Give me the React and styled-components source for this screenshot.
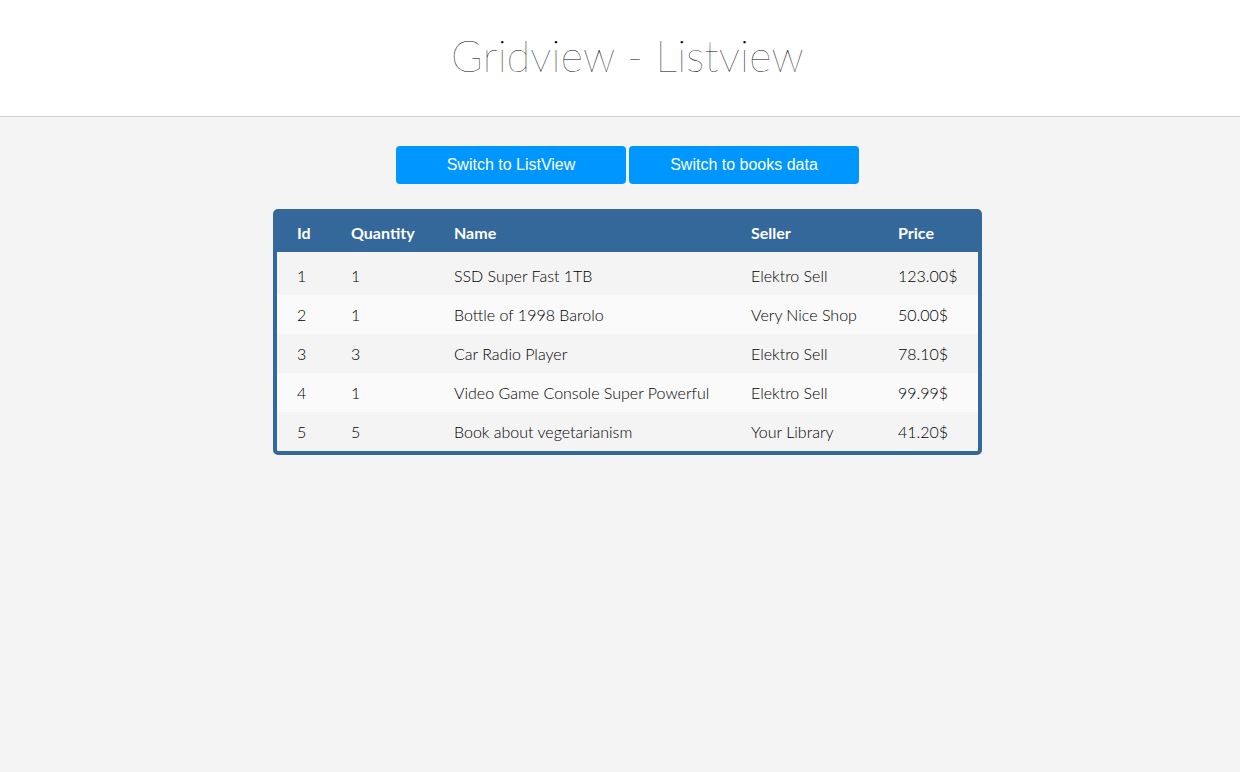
import React from "react";
import styled, { createGlobalStyle } from "styled-components";

const Global = createGlobalStyle`
  html, body { margin: 0; padding: 0; }
  body {
    background: #f4f4f4;
    font-family: Lato, "Open Sans", sans-serif;
    color: #000;
  }
`;

const Page = styled.div`
  min-height: 772px;
  padding-left: 15px;
  box-sizing: border-box;
`;

const Header = styled.header`
  height: 117px;
  box-sizing: border-box;
  padding: 0 0 6px 15px;
  margin-left: -15px;
  background: #ffffff;
  border-bottom: 1px solid #d4d4d4;
  display: flex;
  align-items: center;
  justify-content: center;
`;

const Title = styled.h1`
  margin: 0;
  font-family: Lato, sans-serif;
  font-weight: 100;
  font-size: 43px;
  color: #000;
  letter-spacing: 0.2px;
`;

const Main = styled.main`
  display: flex;
  flex-direction: column;
  align-items: center;
  padding-top: 29px;
`;

const Buttons = styled.div`
  display: flex;
  gap: 3px;
`;

const Button = styled.button`
  width: 230px;
  height: 38px;
  border: none;
  border-radius: 4px;
  background: #0096ff;
  color: #ffffff;
  font-family: "Liberation Sans", Arial, sans-serif;
  font-size: 16px;
  cursor: pointer;
`;

const TableFrame = styled.div`
  margin-top: 25px;
  width: 709px;
  box-sizing: border-box;
  border: 4px solid #35689a;
  border-radius: 5px;
  overflow: hidden;
  background: #35689a;
`;

const Table = styled.table`
  width: 100%;
  border-collapse: collapse;
  table-layout: fixed;
`;

const Th = styled.th`
  height: 39px;
  padding: 0 0 0 20px;
  text-align: left;
  font-family: Lato, sans-serif;
  font-weight: 700;
  font-size: 16px;
  color: #ffffff;
  background: #35689a;
`;

const Row = styled.tr`
  background: ${(p) => (p.$odd ? "#f4f4f4" : "#fafafa")};
`;

const Td = styled.td`
  height: ${(p) => (p.$first ? "43px" : "39px")};
  padding: ${(p) => (p.$first ? "4px 0 0 20px" : "0 0 0 20px")};
  box-sizing: border-box;
  font-family: Lato, sans-serif;
  font-weight: 300;
  font-size: 16px;
  color: #000;
  white-space: nowrap;
`;

const cols = [54, 103, 297, 147, 100];

const data = [
  { id: 1, qty: 1, name: "SSD Super Fast 1TB", seller: "Elektro Sell", price: "123.00$" },
  { id: 2, qty: 1, name: "Bottle of 1998 Barolo", seller: "Very Nice Shop", price: "50.00$" },
  { id: 3, qty: 3, name: "Car Radio Player", seller: "Elektro Sell", price: "78.10$" },
  { id: 4, qty: 1, name: "Video Game Console Super Powerful", seller: "Elektro Sell", price: "99.99$" },
  { id: 5, qty: 5, name: "Book about vegetarianism", seller: "Your Library", price: "41.20$" },
];

export default function App() {
  return (
    <>
      <Global />
      <Page>
        <Header>
          <Title>Gridview - Listview</Title>
        </Header>
        <Main>
          <Buttons>
            <Button>Switch to ListView</Button>
            <Button>Switch to books data</Button>
          </Buttons>
          <TableFrame>
            <Table>
              <colgroup>
                {cols.map((w, i) => (
                  <col key={i} style={{ width: w }} />
                ))}
              </colgroup>
              <thead>
                <tr>
                  <Th>Id</Th>
                  <Th>Quantity</Th>
                  <Th>Name</Th>
                  <Th>Seller</Th>
                  <Th>Price</Th>
                </tr>
              </thead>
              <tbody>
                {data.map((r, i) => (
                  <Row key={r.id} $odd={i % 2 === 0}>
                    <Td $first={i === 0}>{r.id}</Td>
                    <Td $first={i === 0}>{r.qty}</Td>
                    <Td $first={i === 0}>{r.name}</Td>
                    <Td $first={i === 0}>{r.seller}</Td>
                    <Td $first={i === 0}>{r.price}</Td>
                  </Row>
                ))}
              </tbody>
            </Table>
          </TableFrame>
        </Main>
      </Page>
    </>
  );
}
